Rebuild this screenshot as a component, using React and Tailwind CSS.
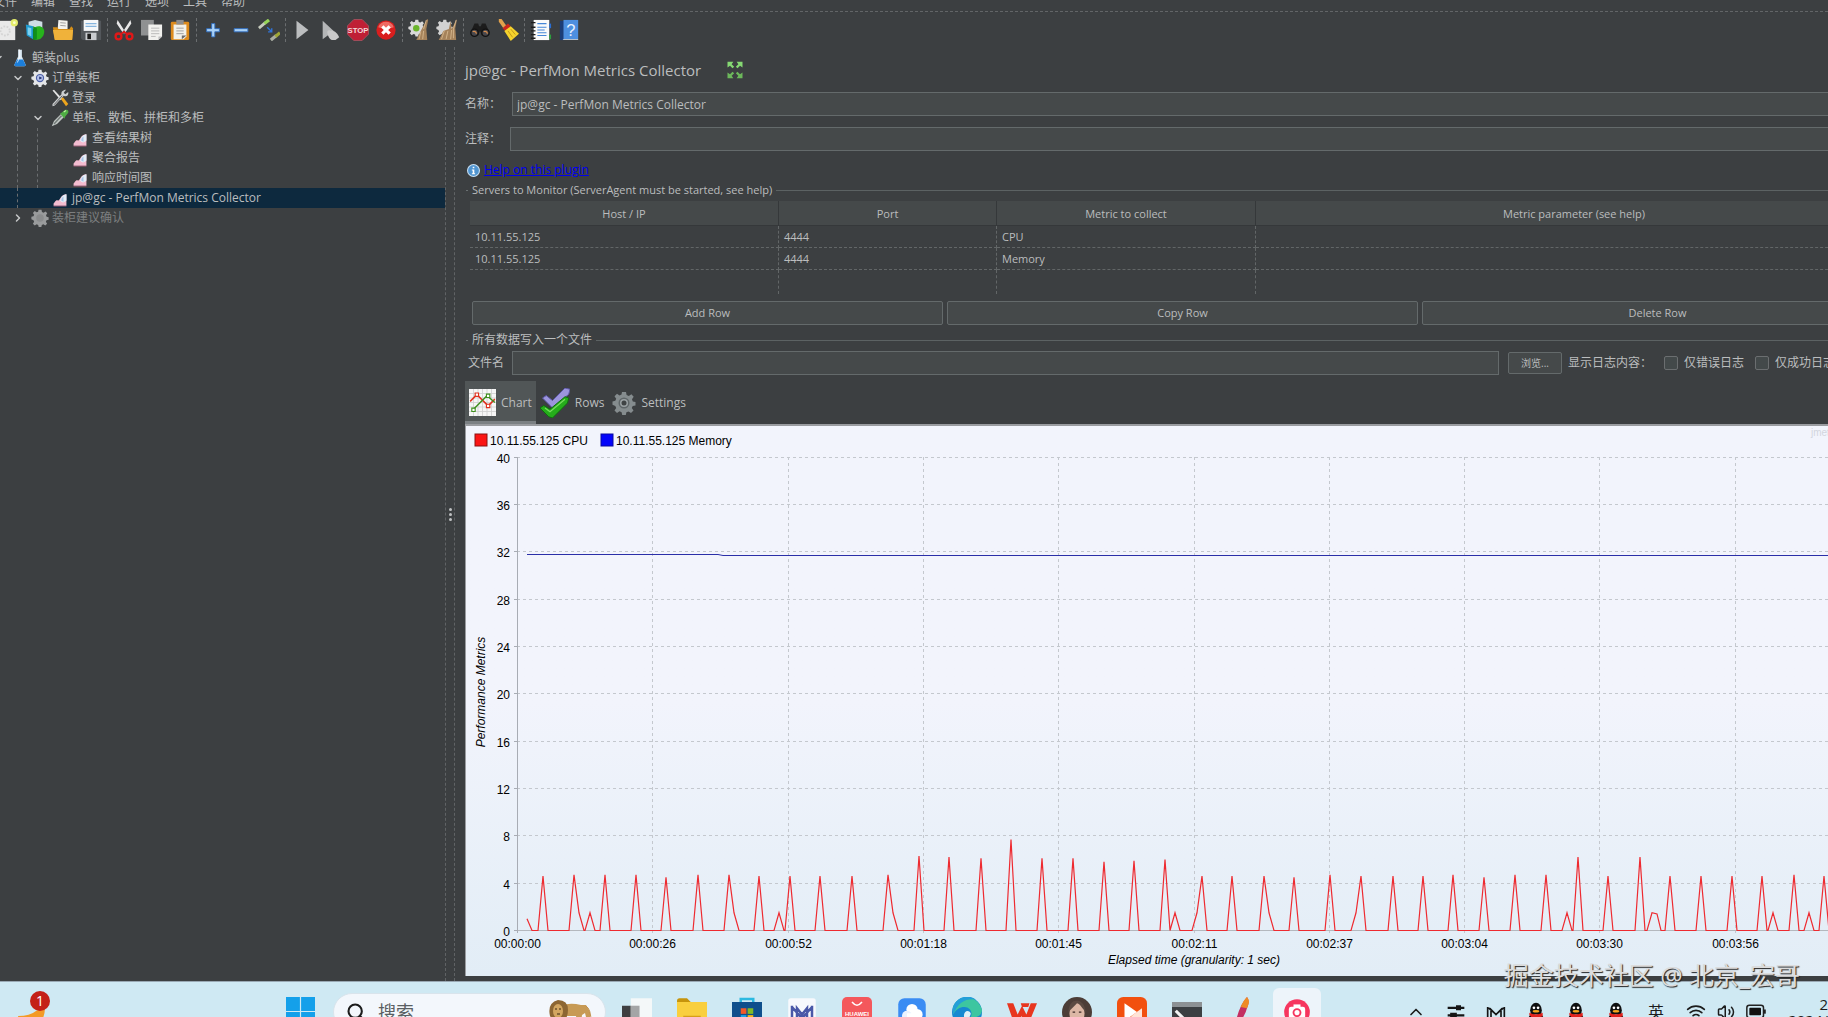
import { Search, ChevronDown, ChevronRight, ChevronUp, Wifi, Volume2 } from 'lucide-react';

const MENUS = ['文件', '编辑', '查找', '运行', '选项', '工具', '帮助'];

const TOOLBAR = [
  [['new', '新建'], ['templates', '模板'], ['open', '打开'], ['save', '保存']],
  [['cut', '剪切'], ['copy', '复制'], ['paste', '粘贴']],
  [['plus', '全部展开'], ['minus', '全部折叠'], ['toggle', '切换']],
  [['start', '启动'], ['startNoPause', '不停顿开始'], ['stop', '停止'], ['shutdown', '关闭']],
  [['clear', '清除'], ['clearAll', '清除全部']],
  [['binoculars', '查找'], ['broom', '重置查找']],
  [['functions', '函数助手对话框'], ['help', '帮助']],
];

const TREE = [
  { level: 0, icon: 'flask', label: '鲸装plus', open: true },
  { level: 1, icon: 'gear', label: '订单装柜', open: true },
  { level: 2, icon: 'tools', label: '登录' },
  { level: 2, icon: 'pipette', label: '单柜、散柜、拼柜和多柜', open: true },
  { level: 3, icon: 'listener', label: '查看结果树' },
  { level: 3, icon: 'listener', label: '聚合报告' },
  { level: 3, icon: 'listener', label: '响应时间图' },
  { level: 2, icon: 'listener', label: 'jp@gc - PerfMon Metrics Collector', selected: true },
  { level: 1, icon: 'gearOff', label: '装柜建议确认', open: false, disabled: true },
];

const SERVERS = [
  { host: '10.11.55.125', port: '4444', metric: 'CPU' },
  { host: '10.11.55.125', port: '4444', metric: 'Memory' },
];

const gearPath =
  'M10 1h4l.6 3 2.2.9L19.400 3.200l2.300 2.600-1.700 2.500.8 2.100 2.700.6v3.400l-2.800.6-.9 2.100 1.700 2.500-2.500 2.500-2.500-1.700-2.100.9-.6 2.700h-3.600l-.6-2.800-2.100-.9-2.500 1.700-2.500-2.500 1.700-2.500-.9-2.100L.5 13.800v-3.400l2.800-.6.9-2.100-1.700-2.500L5 2.700l2.500 1.700 2-.8z';

const icons = {
  new: (
    <>
      <path d="M0 2h21v21H0z" fill="#e9e9e9" />
      <circle cx="10" cy="13" r="5" fill="none" stroke="#d4d4d4" strokeWidth="2" strokeDasharray="2 1.5" />
      <circle cx="20" cy="4" r="4" fill="#e3ec6b" />
      <circle cx="20" cy="4" r="1.500" fill="#fbffd0" />
    </>
  ),
  templates: (
    <>
      <path d="M5 3l7-2 8 2v8H5z" fill="#cfdde4" />
      <path d="M2 6l8 2v14l-7-4z" fill="#1f9bd0" />
      <path d="M4 9l4 1v9l-4-2z" fill="#7bd0f0" />
      <path d="M12 9c5-3 11 0 10 6s-6 9-11 7z" fill="#27b31c" />
      <path d="M10 8l4 2v12l-4 1z" fill="#0f8f1a" />
    </>
  ),
  open: (
    <>
      <path d="M7 1l10 1v11H6z" fill="#f3f3ee" />
      <path d="M9 4l6 .5M9 7l6 .5" stroke="#9a9a9a" />
      <path d="M1 9h5l1 2h12l2-3 2 2-1 12H3z" fill="#d58f17" />
      <path d="M1 12h22l-1 11H3z" fill="#f0b23a" />
    </>
  ),
  save: (
    <>
      <path d="M1 2h22v21H3l-2-2z" fill="#53575b" />
      <path d="M4 1h16v12H4z" fill="#f5f7f9" />
      <path d="M6 5h12M6 8h12" stroke="#86b5de" strokeWidth="1.500" />
      <path d="M6 15h12v8H6z" fill="#c9ccd0" />
      <path d="M8 16h4v6H8z" fill="#1c1c1c" />
    </>
  ),
  cut: (
    <>
      <path d="M5 1l9 14-2 2L4 5zM19 1l-9 14 2 2 8-12z" fill="#e8e8e8" />
      <circle cx="6" cy="19" r="3.200" fill="none" stroke="#e01818" strokeWidth="2.500" />
      <circle cx="18" cy="19" r="3.200" fill="none" stroke="#e01818" strokeWidth="2.500" />
      <path d="M9 16l3-2 3 2" fill="none" stroke="#e01818" strokeWidth="2" />
    </>
  ),
  copy: (
    <>
      <path d="M0 1h14v17H0z" fill="#8f9192" />
      <path d="M8 6h15v13l-4 4H8z" fill="#f1f1ee" />
      <path d="M11 10h9M11 13h9M11 16h9M11 19h5" stroke="#b6b6b6" />
      <path d="M19 23v-4h4z" fill="#bdbdbd" />
    </>
  ),
  paste: (
    <>
      <rect x="2" y="3" width="20" height="20" rx="1.500" fill="#dd8b1c" />
      <path d="M5 6h14v13l-3 3H5z" fill="#f2f1ea" />
      <path d="M8 1h8v5H8z" fill="#8d8d8d" />
      <path d="M8 10h8M8 13h8M8 16h8" stroke="#9b9b9b" />
      <path d="M14 22v-4h5z" fill="#6b6b6b" />
    </>
  ),
  plus: <path d="M10.500 5h3.500v5.500H19V14h-5v5.500h-3.500V14H5v-3.500h5.500z" fill="#a9d2f8" stroke="#2f6cc0" />,
  minus: <path d="M4.500 10.500h15V14h-15z" fill="#a9d2f8" stroke="#2f6cc0" />,
  toggle: (
    <>
      <path d="M1 10l7-6" stroke="#c6cbbd" strokeWidth="3" />
      <path d="M7 5l5-4" stroke="#97d45a" strokeWidth="3.500" />
      <path d="M14 23l6-5" stroke="#a9ada2" strokeWidth="3.500" />
      <path d="M19 19l5-4" stroke="#9fa636" strokeWidth="3.500" />
      <path d="M10 9l5 5M15 10v4h-4" fill="none" stroke="#2f73d8" strokeWidth="1.500" />
    </>
  ),
  start: <path d="M6 2l13 10L6 22z" fill="#bcbebf" />,
  startNoPause: (
    <>
      <path d="M4 2l12 11L4 22z" fill="#b4b6b7" />
      <path d="M9 14c1-2 3-2 4-1 2-2 8 3 9 7l-4 3h-4c-3-1-5-6-5-9z" fill="#c9c9c9" />
    </>
  ),
  stop: (
    <>
      <path d="M7.500.5h9l7 7v9l-7 7h-9l-7-7v-9z" fill="#bf1f35" stroke="#a3515e" />
      <text x="12" y="15.500" textAnchor="middle" fontSize="8.500" fontWeight="700" fill="#f3d5d8" fontFamily="Liberation Sans, sans-serif">STOP</text>
    </>
  ),
  shutdown: (
    <>
      <circle cx="12" cy="12" r="10.500" fill="#d81e1e" />
      <path d="M3.500 9a9 9 0 0 1 17 0c-4 2-13 2-17 0z" fill="#ee6a63" />
      <path d="M8 8l8 8M16 8l-8 8" stroke="#fff" strokeWidth="3.500" />
    </>
  ),
  clear: (
    <>
      <g transform="scale(.8)"><path d={gearPath} fill="#dadada" /></g>
      <circle cx="9" cy="10" r="3.500" fill="#6bb52c" />
      <path d="M21 0l1 1-2 10 1 12H9l6-12z" fill="#a5825a" />
      <path d="M14 14l-2 8M17 13l-1 9M20 1l-3 10" stroke="#d5b78d" />
    </>
  ),
  clearAll: (
    <>
      <g transform="scale(.8)"><path d={gearPath} fill="#d2d2d2" /></g>
      <path d="M16 2l1 8M23 0l-2 10 1 13H3l5-10 6-2 2-9 1 9z" fill="#a5825a" />
      <path d="M9 13l-3 9M13 13l-2 9M17 12l-1 10M22 1l-3 10v10" stroke="#d5b78d" fill="none" />
    </>
  ),
  binoculars: (
    <>
      <path d="M6 5h4l1 3h2l1-3h4l4 9-4 4h-4l-2-5-2 5H6l-4-4z" fill="#1c1c1c" />
      <circle cx="6" cy="15" r="4" fill="#47474d" stroke="#111" strokeWidth="1.500" />
      <circle cx="18" cy="15" r="4" fill="#47474d" stroke="#111" strokeWidth="1.500" />
      <path d="M4 14a2.500 2.500 0 0 1 4 2M16 14a2.500 2.500 0 0 1 4 2" fill="none" stroke="#d38a4b" strokeWidth="1.300" />
    </>
  ),
  broom: (
    <>
      <path d="M2 0l3 0 5 7-3 3-5-7z" fill="#e0a04c" />
      <path d="M6 10l6-5 3 3-6 5z" fill="#c9261d" />
      <path d="M8 13l7-5 9 8-9 8z" fill="#f5d32c" />
      <path d="M12 13l5 7M15 11l5 6" stroke="#c0951a" />
    </>
  ),
  functions: (
    <>
      <path d="M4 1h17v22H4z" fill="#fafafa" />
      <path d="M21 5h2v5h-2z" fill="#2a6ed1" />
      <path d="M21 17h2v5h-2z" fill="#2c9e3e" />
      <path d="M8 5h10M8 9h10M8 12h8M8 15h10M8 18h10" stroke="#4686d8" strokeWidth="1.300" />
      <path d="M1 4h5M1 9h5M1 13h5M1 17h5M1 21h5" stroke="#1e1e1e" strokeWidth="1.500" />
    </>
  ),
  help: (
    <>
      <path d="M2 2h5v21H2z" fill="#1c3d77" />
      <path d="M6 1h16v21H6z" fill="#4d8fe0" />
      <path d="M6 22h16v1H5z" fill="#dfe8f3" />
      <text x="14" y="18" textAnchor="middle" fontSize="18" fill="#e8f1fd" fontFamily="Liberation Sans, sans-serif">?</text>
    </>
  ),
  flask: (
    <>
      <path d="M9.500 1h5v9l5 11q0 2-2 2h-11q-2 0-2-2l5-11z" fill="#dcebf5" />
      <path d="M8 14h8l3.500 7q0 2-2 2h-11q-2 0-2-2z" fill="#1c7fdb" />
      <path d="M10 1h1.500v10l-3 7" stroke="#fff" fill="none" />
    </>
  ),
  gear: (
    <>
      <path d={gearPath} fill="#e4e6e8" />
      <circle cx="12" cy="12" r="5.500" fill="#4c5fa6" />
      <circle cx="12" cy="12" r="4" fill="#b4c1ea" />
      <path d="M11 10l4 2-4 2z" fill="#1d2b69" />
    </>
  ),
  gearOff: (
    <>
      <path d={gearPath} fill="#999b9c" />
      <circle cx="12" cy="12" r="5" fill="#8a8c8d" />
    </>
  ),
  tools: (
    <>
      <path d="M2 2l2-1 11 12-2 2z" fill="#e3e3e3" />
      <path d="M13 13l3-2 7 9-3 3z" fill="#eda51d" />
      <path d="M20 1l-3 4 2 2 4-3c1 5-3 7-6 5L5 22l-3 1 0-3L14 7c-1-4 3-6 6-6z" fill="#cdd0d2" />
      <path d="M4 21L15 9" stroke="#3b3b3b" />
    </>
  ),
  pipette: (
    <>
      <path d="M1 23l3-7L14 6l4 4L8 20z" fill="#c2c8c6" />
      <path d="M4 20L14 9" stroke="#727a77" strokeWidth="2" />
      <path d="M12 6l2-1 5-4q5-1 4 4l-4 5-1 3z" fill="#4fae44" />
      <path d="M17 4l3-2" stroke="#c4f3a5" strokeWidth="1.500" />
    </>
  ),
  listener: (
    <>
      <path d="M1 22v-4c2-2 4-6 6-6 2 2 3 1 5-2 2-4 5-8 11-8v20z" fill="#f3bcd0" />
      <path d="M12 13c2-6 5-10 11-11v11c-4 4-8 4-11 0z" fill="#e4eef8" />
      <path d="M14 13c0-3 2-6 4-7v9z" fill="#a9c3e6" />
      <path d="M1 22.500H23" stroke="#c9688c" />
    </>
  ),
  expand: (
    <>
      <path d="M3 2h7L8 5l3 3-2 2-3-3-3 2zM21 2v7l-3-2-3 3-2-2 3-3-2-3z" fill="#85d873" />
      <path d="M3 22v-7l3 2 3-3 2 2-3 3 2 3zM21 22h-7l2-3-3-3 2-2 3 3 3-2z" fill="#6cb85b" />
    </>
  ),
  info: (
    <>
      <circle cx="12" cy="12" r="11" fill="#4f94d0" stroke="#c8dff2" strokeWidth="2" />
      <path d="M10.500 5h3v3h-3zM9 10h4.500v7H15v2H9v-2h1.500v-5H9z" fill="#fff" />
    </>
  ),
  chartTab: (
    <>
      <path d="M0 0h24v24H0z" fill="#f6f6f6" />
      <path d="M4 0v24M8 0v24M12 0v24M16 0v24M20 0v24M0 4h24M0 8h24M0 12h24M0 16h24M0 20h24" stroke="#cfcfcf" strokeWidth=".7" />
      <path d="M1 11l6-6 10 10 6-6" fill="none" stroke="#e0301e" strokeWidth="1.300" />
      <path d="M4 18L16 6l7 6" fill="none" stroke="#3f8f1e" strokeWidth="1.300" />
      <path d="M5.500 3.500h3v3h-3zM15.500 13.500h3v3h-3z" fill="#fff" stroke="#e0301e" />
      <path d="M2.500 17h3v3h-3zM15.500 4.500h3v3h-3z" fill="#fff" stroke="#3f8f1e" />
    </>
  ),
  rowsTab: (
    <>
      <path d="M2 8l3-2 5 4L20 0l4 1-1 4-13 11z" fill="#9c95dd" stroke="#5c56a5" strokeWidth=".8" />
      <path d="M0 16l3-2 5 3L20 7l3 1-1 4L10 24l-3-1z" fill="#25ad1b" stroke="#0f6f0d" strokeWidth=".8" />
      <path d="M4 16l4 3L20 9" fill="none" stroke="#79dd5f" />
    </>
  ),
  settingsTab: (
    <>
      <path d={gearPath} fill="#858c8e" />
      <circle cx="12" cy="12" r="5.500" fill="#5f6668" />
      <circle cx="12" cy="12" r="4" fill="#9aa1a3" />
      <circle cx="12" cy="12" r="2.500" fill="#3f4344" />
    </>
  ),
  // taskbar
  windows: (
    <path d="M0 0h11.500v11.500H0zM12.500 0H24v11.500H12.500zM0 12.500h11.500V24H0zM12.500 12.500H24V24H12.500z" fill="#14a0ea" />
  ),
  taskview: (
    <>
      <path d="M0 7h14v15H0z" fill="#3e3f41" />
      <path d="M7 1h17v16H7z" fill="#f7f9fa" opacity=".9" />
      <path d="M7 7h7v10H7z" fill="#a4a5a6" />
    </>
  ),
  folder: (
    <>
      <path d="M0 3q0-2 2-2h6l3 3h-11z" fill="#c6940c" />
      <path d="M0 4h24v17q0 2-2 2H2q-2 0-2-2z" fill="#f9cf3e" />
      <path d="M5 15h14v3H5z" fill="#d79f18" />
    </>
  ),
  store: (
    <>
      <path d="M7 6V1.500h10V6" fill="none" stroke="#2cb9e0" strokeWidth="2" />
      <path d="M0 4h24v17q0 3-3 3H3q-3 0-3-3z" fill="#0f4f8c" />
      <path d="M7 9h4.500v4.500H7z" fill="#f1592a" />
      <path d="M12.500 9H17v4.500h-4.500z" fill="#80bb27" />
      <path d="M7 14.500h4.500V19H7z" fill="#19a7ec" />
      <path d="M12.500 14.500H17V19h-4.500z" fill="#fdb914" />
    </>
  ),
  mapp: (
    <>
      <rect x="1" y="1" width="22" height="23" rx="2" fill="#f7f9fd" />
      <path d="M4 20V7M8 20V9l4 5 4-5v11M20 20V7M4 8l8 9 8-9" fill="none" stroke="#4a58a8" strokeWidth="2" />
    </>
  ),
  huawei: (
    <>
      <rect width="24" height="24" rx="4" fill="#f4585c" />
      <path d="M8 4q4 5 8 0" fill="none" stroke="#fff" strokeWidth="1.200" />
      <text x="12" y="15.500" textAnchor="middle" fontSize="4.800" fontWeight="700" fill="#fff" fontFamily="Liberation Sans, sans-serif">HUAWEI</text>
    </>
  ),
  cloud: (
    <>
      <rect x="1" y="1" width="22" height="23" rx="5" fill="#3a8cf3" />
      <circle cx="12" cy="10" r="4.500" fill="#fff" />
      <circle cx="8" cy="15" r="4" fill="#eaf3ff" />
      <circle cx="16" cy="14" r="4.500" fill="#fff" />
      <path d="M8 13h8v6H8z" fill="#fff" />
    </>
  ),
  edge: (
    <>
      <circle cx="12" cy="12" r="12" fill="#1789d1" />
      <path d="M1 8C4-2 20-3 24 10c0 5-4 7-9 6 2-4-1-8-5-8S3 10 1 14z" fill="#3dc6a0" />
      <path d="M1 8C4-1 14-2 19 2 11 1 5 4 1 14z" fill="#249fd8" />
      <path d="M10 17c-2-5 3-8 5-4 0 2-2 3 0 4 2 1 5 1 7-1-2 6-10 6-12 1z" fill="#dff1f7" />
    </>
  ),
  wps: (
    <path d="M0 5h5l3.500 9L12 7l3.500 7L19 5h5l-7 17h-3l-2.500-7L9 22H6zM11 5h7l-1 3h-5z" fill="#e8361f" />
  ),
  avatar: (
    <>
      <circle cx="12" cy="12" r="12" fill="#4c3d37" />
      <ellipse cx="12" cy="13" rx="6" ry="9" fill="#dcb7a5" />
      <path d="M5 12C6 3 10 3 12 3s6 1 7 9c-3-3-4-6-7-7-2 2-4 4-7 7z" fill="#5b4a42" />
      <path d="M8.500 12h2M13.500 12h2" stroke="#3b2a26" />
      <path d="M10.500 18h3" stroke="#b6504d" />
    </>
  ),
  player: (
    <>
      <rect width="24" height="24" rx="5" fill="#f2500f" />
      <path d="M6 5l10 7-10 7z" fill="#fff" />
      <path d="M20 9v11H7l6-6z" fill="#ffe3d6" />
    </>
  ),
  terminal: (
    <>
      <path d="M0 4h24v20H0z" fill="#3c3f42" />
      <path d="M0 4h24v4H0z" fill="#8d9194" />
      <path d="M3 11l5 5-5 5" fill="none" stroke="#f3f3f3" strokeWidth="2.500" />
      <path d="M11 20h8" stroke="#f3f3f3" strokeWidth="2" />
    </>
  ),
  feather: (
    <>
      <path d="M16 0c3 4 0 8-1 12L9 24H7c0-9 4-18 9-24z" fill="#c32f62" />
      <path d="M16 0c3 4 1 6 0 9l-5-1c1-3 3-6 5-8z" fill="#ee8b25" />
    </>
  ),
  camera: (
    <>
      <circle cx="12" cy="12" r="11" fill="#f6365f" />
      <rect x="5" y="7.500" width="14" height="10" rx="2" fill="#fff" />
      <path d="M9 5.500h6v3H9z" fill="#fff" />
      <circle cx="12" cy="12.500" r="3" fill="#fff" stroke="#f6365f" strokeWidth="1.600" />
    </>
  ),
  lion: (
    <>
      <path d="M12 6q8-4 20-1l5 0 4 7v9h-3l-2-8-3 2-1 8h-4l-1-7h-9l-2 7h-4z" fill="#c79a55" />
      <path d="M37 6q5 3 5 16" fill="none" stroke="#c08f4a" />
      <path d="M9 0q10 0 10 10 0 8-6 12-8 1-12-6Q-2 3 9 0z" fill="#8d6632" />
      <ellipse cx="9" cy="11" rx="5" ry="7" fill="#d3a660" />
      <path d="M6 9h2M10 9h2M8 14h3" stroke="#3a2713" />
    </>
  ),
  weather: <path d="M1 15q12 0 18-5 5-2 8-6 2 6-1 13l-4 13H10Q3 24 1 15z" fill="#f39a26" />,
  sliders: (
    <>
      <path d="M2 7h20M2 16h20" stroke="#151515" strokeWidth="2.500" />
      <path d="M12 4h6v6h-6zM5 13h8v6H5z" fill="#151515" />
    </>
  ),
  mtray: <path d="M2 22V6M6 22V9l6 6 6-6v13M22 22V6M3 7l9 8 9-8" fill="none" stroke="#151515" strokeWidth="2" />,
  qq: (
    <>
      <ellipse cx="12" cy="10" rx="7" ry="9" fill="#0f0f0f" />
      <ellipse cx="12" cy="20" rx="9" ry="7" fill="#0f0f0f" />
      <ellipse cx="12" cy="21" rx="6" ry="6" fill="#fff" />
      <circle cx="9.500" cy="7" r="1.600" fill="#fff" />
      <circle cx="14.500" cy="7" r="1.600" fill="#fff" />
      <ellipse cx="12" cy="11" rx="4" ry="1.500" fill="#f5a51b" />
      <path d="M4 13q8 4 16 0v4q-8 3-12 1v4H6v-5l-2-1z" fill="#e3211c" />
    </>
  ),
  battery: (
    <>
      <rect x="1" y="4" width="20" height="15" rx="3" fill="none" stroke="#222" strokeWidth="1.800" />
      <rect x="4" y="7" width="14" height="9" rx="1" fill="#111" />
      <path d="M22.500 9v5" stroke="#222" strokeWidth="2.500" />
    </>
  ),
};

const Icon = ({ name, className = 'w-[22px] h-[22px]', viewBox = '0 0 24 24' }) => (
  <svg viewBox={viewBox} className={`shrink-0 ${className}`} aria-hidden="true">{icons[name]}</svg>
);

const Toolbar = () => (
  <div className="flex items-center h-[35px] -ml-[7px] shrink-0">
    {TOOLBAR.map((group, i) => (
      <div key={i} className="flex items-center">
        {i > 0 && <span className="w-[5px] h-6 flex justify-center"><span className="border-l border-dashed border-[#6b6e70]" /></span>}
        {group.map(([name, title]) => (
          <button key={name} aria-label={title} className="w-7 h-7 flex items-center justify-center">
            <Icon name={name} />
          </button>
        ))}
      </div>
    ))}
  </div>
);

const TreeRow = ({ level, icon, label, open, selected, disabled }) => (
  <li className={`flex items-center h-5 whitespace-nowrap ${selected ? 'bg-[#0d293e]' : ''} ${disabled ? 'text-[#7d7f80]' : ''}`}>
    <span className={level === 0 ? '-ml-3' : 'w-[17px]'} />
    {Array.from({ length: Math.max(level - 1, 0) }, (_, i) => (
      <span key={i} className="w-5 h-5 border-l border-dashed border-[#6b6e70]" />
    ))}
    <span className={`w-5 flex justify-center text-[#c5c7c8] ${level > 0 ? '-ml-[9px]' : ''}`}>
      {open === true && <ChevronDown size={12} strokeWidth={3} />}
      {open === false && <ChevronRight size={12} strokeWidth={3} />}
    </span>
    <span className="w-6 flex justify-center">
      <Icon name={icon} className={icon === 'listener' ? 'w-[14px] h-[14px] mt-1' : 'w-[18px] h-[18px]'} />
    </span>
    <span>{label}</span>
  </li>
);

const GroupTitle = ({ children }) => (
  <div className="flex items-center gap-1 h-[18px] pl-px whitespace-nowrap">
    <span className="w-0.5 border-t border-[#6a7072]" />
    <span>{children}</span>
    <span className="flex-1 border-t border-[#5c6263]" />
  </div>
);

const inputClass = 'flex-1 min-w-0 h-6 px-1 bg-[#45494a] border border-[#646a6b] outline-none';

const ServerTable = () => (
  <div className="mt-0.5 ml-[5px]">
    <table className="w-full table-fixed border-separate border-spacing-0 text-left">
      <colgroup>
        <col className="w-[309px]" />
        <col className="w-[218px]" />
        <col className="w-[259px]" />
        <col />
      </colgroup>
      <thead>
        <tr className="h-[25px] bg-[#45494a]">
          {['Host / IP', 'Port', 'Metric to collect', 'Metric parameter (see help)'].map((h) => (
            <th key={h} className="p-0 pt-0.5 font-normal text-center border-r border-b border-[#35383a]">{h}</th>
          ))}
        </tr>
      </thead>
      <tbody>
        {SERVERS.map((s) => (
          <tr key={s.metric} className="h-[22px]">
            {[s.host, s.port, s.metric, ''].map((cell, i) => (
              <td key={i} className="p-0 pl-[5px] border-r border-b border-dashed border-[#626667]">{cell}</td>
            ))}
          </tr>
        ))}
        <tr className="h-6">
          {[0, 1, 2, 3].map((i) => <td key={i} className="p-0 border-r border-dashed border-[#626667]" />)}
        </tr>
      </tbody>
    </table>
  </div>
);

// plot geometry, relative to the chart panel
const LEFT = 51;
const BASE = 504;
const UNIT = 11.83;
const STEP_X = 135.3;
const TIMES = ['00:00:00', '00:00:26', '00:00:52', '00:01:18', '00:01:45', '00:02:11', '00:02:37', '00:03:04', '00:03:30', '00:03:56'];

// [x, value, shape], "r" and "l" peaks have a slower slope on that side
const CPU = [
  [25, 4.6], [56, 4.7, 'r'], [72, 1.5], [87, 4.7], [118, 4.7], [148, 4.5], [180, 4.7], [211, 4.7, 'r'],
  [241, 4.6], [261, 1.5], [272, 4.6], [302, 4.6], [334, 4.6], [370, 4.7, 'r'], [401, 6.3], [431, 6.2],
  [463, 6.1], [493, 7.7], [524, 6.1], [555, 6.1], [586, 5.8], [616, 5.9], [647, 6], [657, 1.5],
  [684, 4.6, 'l'], [714, 4.6], [746, 4.6, 'r'], [776, 4.5], [812, 4.7], [843, 4.6, 'l'], [875, 4.6],
  [905, 4.6], [935, 4.7], [966, 4.5], [997, 4.7], [1028, 4.7], [1049, 1.5], [1060, 6.2], [1090, 4.6],
  [1122, 6.2], [1134, 1.5, 'flat'], [1152, 4.6], [1183, 4.6], [1214, 4.6], [1244, 4.6], [1255, 1.5],
  [1276, 4.7], [1291, 1.5], [1306, 4.6], [1337, 4.6], [1368, 4.6],
];

const cpuPoints = () => {
  const pts = [[9, 1], [14, 0]];
  CPU.forEach(([x, v, shape]) => {
    if (shape === 'l') pts.push([x - 10, 0], [x - 5, 1.5]);
    else pts.push([x - 5, 0]);
    pts.push([x, v]);
    if (shape === 'flat') pts.push([x + 5, 1.4], [x + 9, 0]);
    else if (shape === 'r') pts.push([x + 5, 1.5], [x + 10, 0]);
    else pts.push([x + 5, 0]);
  });
  return pts.map(([x, v]) => `${LEFT + 1 + x},${BASE + 0.5 - v * UNIT}`).join(' ');
};

const Chart = () => (
  <div className="flex-1 min-h-0 overflow-hidden border-t-2 border-l border-[#9a9ca0] bg-linear-to-b from-[#f2f4fc] from-50% to-[#e2edf6] text-black">
    <svg className="block w-full h-full" fontFamily="Liberation Sans, sans-serif" fontSize="12">
      <rect x="9" y="8" width="12" height="12" fill="#fb1414" stroke="#8a1010" />
      <text x="24" y="19">10.11.55.125 CPU</text>
      <rect x="135" y="8" width="12" height="12" fill="#0404fa" stroke="#0808a0" />
      <text x="150" y="19">10.11.55.125 Memory</text>
      <text x="1345" y="10" fill="#d3d6de" fontSize="10">jmeter-plugins.org</text>

      {Array.from({ length: 11 }, (_, i) => {
        const y = Math.round(BASE - i * 4 * UNIT) + 0.5;
        return (
          <g key={i}>
            <line x1={LEFT} x2="1430" y1={y} y2={y} stroke={i ? '#c4c8ce' : '#b4b8be'} strokeDasharray={i ? '3 3' : undefined} />
            <line x1={LEFT - 3} x2={LEFT} y1={y} y2={y} stroke="#a8acb4" />
            <text x={LEFT - 7} y={y + 5} textAnchor="end">{i * 4}</text>
          </g>
        );
      })}
      {TIMES.map((t, i) => {
        const x = Math.round(LEFT + i * STEP_X) + 0.5;
        return (
          <g key={t}>
            <line x1={x} x2={x} y1="31" y2={BASE + 3} stroke={i ? '#c4c8ce' : '#a8acb4'} strokeDasharray={i ? '3 3' : undefined} />
            <text x={x} y={BASE + 18} textAnchor="middle">{t}</text>
          </g>
        );
      })}

      <polyline points="61,128.500 252,128.500 257,129.500 1430,129.500" fill="none" stroke="#2a2fa8" />
      <polyline points={cpuPoints()} fill="none" stroke="#ee2a30" strokeWidth="1.200" />
      <text x="728" y={BASE + 34} textAnchor="middle" fontStyle="italic">Elapsed time (granularity: 1 sec)</text>
      <text transform="translate(19 266) rotate(-90)" textAnchor="middle" fontStyle="italic">Performance Metrics</text>
    </svg>
  </div>
);

const TABS = [
  { icon: 'chartTab', label: 'Chart', size: 'w-[27px] h-[27px]', active: true },
  { icon: 'rowsTab', label: 'Rows', size: 'w-[30px] h-[30px]' },
  { icon: 'settingsTab', label: 'Settings', size: 'w-[24px] h-[24px]' },
];

// the collector panel is wider than the window and runs off its right edge
const Collector = () => (
  <main className="flex-1 min-w-0 flex flex-col pl-[10px] -mr-[69px] pb-[5px]">
    <div className="flex items-center h-[45px] gap-6 whitespace-nowrap">
      <h1 className="text-[15px]">jp@gc - PerfMon Metrics Collector</h1>
      <button aria-label="Expand"><Icon name="expand" className="w-5 h-5" /></button>
    </div>
    <div className="flex items-center">
      <label htmlFor="name" className="w-[47px]">名称：</label>
      <input id="name" defaultValue="jp@gc - PerfMon Metrics Collector" className={inputClass} />
    </div>
    <div className="flex items-center mt-[11px]">
      <label htmlFor="comment" className="w-[45px]">注释：</label>
      <input id="comment" className={inputClass} />
    </div>
    <div className="flex items-center gap-1 mt-[10px] ml-0.5 h-[18px]">
      <Icon name="info" className="w-[13px] h-[13px]" />
      <a href="#help" className="text-[#0000f0] underline">Help on this plugin</a>
    </div>

    <section className="mt-0.5 pr-1 text-[11px]">
      <GroupTitle>Servers to Monitor (ServerAgent must be started, see help)</GroupTitle>
      <ServerTable />
      <div className="grid grid-cols-3 gap-1 mt-[7px] ml-[7px]">
        {['Add Row', 'Copy Row', 'Delete Row'].map((label) => (
          <button key={label} className="h-6 bg-[#45494a] border border-[#646a6b] rounded-xs">{label}</button>
        ))}
      </div>
    </section>

    <section className="mt-[6px]">
      <GroupTitle>所有数据写入一个文件</GroupTitle>
      <div className="flex items-center mt-0.5 ml-[3px] whitespace-nowrap">
        <label htmlFor="file" className="w-11">文件名</label>
        <input id="file" className={inputClass} />
        <button className="ml-[9px] w-[54px] h-[22px] text-[10px] bg-[#45494a] border border-[#646a6b] rounded-xs">浏览...</button>
        <span className="ml-1.5 w-24">显示日志内容：</span>
        <label className="flex items-center gap-1.5 w-[91px]">
          <input type="checkbox" className="appearance-none w-3.5 h-3.5 bg-[#43494a] border border-[#6b6e70] rounded-xs" />
          仅错误日志
        </label>
        <label className="flex items-center gap-1.5 w-[142px]">
          <input type="checkbox" className="appearance-none w-3.5 h-3.5 bg-[#43494a] border border-[#6b6e70] rounded-xs" />
          仅成功日志
        </label>
      </div>
    </section>

    <div role="tablist" className="flex mt-[6px] h-[43px] shrink-0">
      {TABS.map((tab) => (
        <button
          key={tab.label}
          role="tab"
          aria-selected={!!tab.active}
          className={`flex items-center gap-[5px] px-1 pt-[3px] border-b-3 ${tab.active ? 'bg-[#515657] border-[#7b8083]' : 'border-transparent'}`}
        >
          <Icon name={tab.icon} className={tab.size} />
          {tab.label}
        </button>
      ))}
    </div>
    <Chart />
  </main>
);

const APPS = ['taskview', 'folder', 'store', 'mapp', 'huawei', 'cloud', 'edge', 'wps', 'avatar', 'player', 'terminal', 'feather', 'camera'];

const Taskbar = () => (
  <footer className="flex items-center h-[60px] -mb-6 shrink-0 bg-[#cfe9f3] border-t border-[#9aa9b4] text-[#1c1c1c]">
    <div className="relative w-[286px] h-[42px] shrink-0">
      <Icon name="weather" viewBox="0 0 30 30" className="w-[30px] h-[30px] ml-[17px] mt-[10px]" />
      <span className="absolute left-[30px] top-0 w-5 h-5 rounded-full bg-[#c42018] text-white text-[14px] leading-5 text-center">1</span>
    </div>
    <button aria-label="Start"><Icon name="windows" className="w-[29px] h-[29px]" /></button>
    <label className="flex items-center ml-[18px] w-[273px] h-[38px] px-3 rounded-full bg-[#f3f7fc] border border-[#d9e4ec] shrink-0">
      <Search size={20} strokeWidth={2.5} />
      <input placeholder="搜索" aria-label="搜索" className="ml-3 w-0 flex-1 outline-none text-[18px] leading-6 placeholder:text-[#5a5f63]" />
      <Icon name="lion" viewBox="0 0 44 24" className="w-11 h-6" />
    </label>
    <div className="flex ml-[3px]">
      {APPS.map((app) => (
        <button key={app} aria-label={app} className="w-[55px] h-12 flex items-center justify-center">
          {app === 'camera' ? (
            <span className="w-12 h-12 rounded-md bg-[#edf4fa] flex items-center justify-center"><Icon name={app} className="w-7 h-7" /></span>
          ) : (
            <Icon name={app} className="w-[30px] h-[30px]" />
          )}
        </button>
      ))}
    </div>
    <div className="flex items-center ml-auto shrink-0">
      <span className="w-10 flex justify-center"><ChevronUp size={20} /></span>
      {['sliders', 'mtray', 'qq', 'qq', 'qq'].map((name, i) => (
        <span key={i} className="w-10 flex justify-center"><Icon name={name} className="w-5 h-5" /></span>
      ))}
      <span className="w-10 text-center text-[16px]">英</span>
      <span className="w-[5px]" />
      <span className="w-[30px] flex justify-center"><Wifi size={20} /></span>
      <span className="w-[30px] flex justify-center"><Volume2 size={18} /></span>
      <span className="w-[30px] flex justify-center"><Icon name="battery" className="w-5 h-5" /></span>
      <div className="w-[57px] text-right text-[15px] leading-4">
        <div>2</div>
        <div>2024/</div>
      </div>
    </div>
  </footer>
);

const App = () => (
  <div className="relative h-screen overflow-hidden flex flex-col bg-[#3c3f41] text-[#bbbdbe] text-[12px] leading-[18px] font-['Open_Sans','Noto_Sans_CJK_SC',sans-serif]">
    <nav className="flex items-center h-5 -mt-2 shrink-0 border-b border-dashed border-[#626567]">
      <span className="-ml-[14px]" />
      {MENUS.map((m) => <button key={m} className="w-[38px] text-center whitespace-nowrap">{m}</button>)}
    </nav>
    <Toolbar />
    <div className="flex flex-1 min-h-0">
      <ul className="w-[445px] shrink-0 pt-px overflow-hidden">
        {TREE.map((node) => <TreeRow key={node.label} {...node} />)}
      </ul>
      <div className="w-[10px] shrink-0 flex flex-col items-center justify-center gap-0.5 border-x border-dashed border-[#606365]">
        {[0, 1, 2].map((i) => <span key={i} className="w-[3px] h-[3px] rounded-full bg-[#c0c2c3]" />)}
      </div>
      <Collector />
    </div>
    <Taskbar />
    <div className="absolute right-7 bottom-[26px] text-[25px] leading-8 whitespace-nowrap text-[#dcdcdc] [text-shadow:1px_1px_1px_#222]">掘金技术社区 @ 北京_宏哥</div>
  </div>
);

export default App;
